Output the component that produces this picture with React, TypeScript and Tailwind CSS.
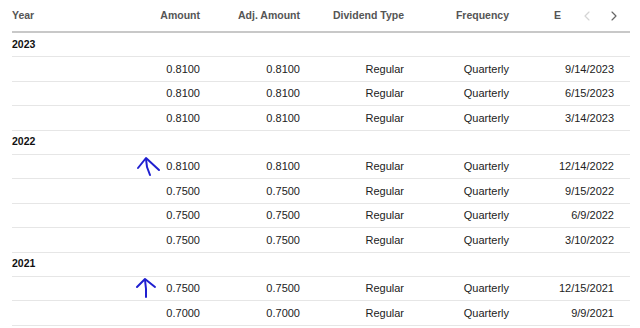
import { ChevronLeft, ChevronRight } from "lucide-react";

type Row = { amount: string; adj: string; type: string; freq: string; date: string };

const groups: { year: string; rows: Row[] }[] = [
  {
    year: "2023",
    rows: [
      { amount: "0.8100", adj: "0.8100", type: "Regular", freq: "Quarterly", date: "9/14/2023" },
      { amount: "0.8100", adj: "0.8100", type: "Regular", freq: "Quarterly", date: "6/15/2023" },
      { amount: "0.8100", adj: "0.8100", type: "Regular", freq: "Quarterly", date: "3/14/2023" },
    ],
  },
  {
    year: "2022",
    rows: [
      { amount: "0.8100", adj: "0.8100", type: "Regular", freq: "Quarterly", date: "12/14/2022" },
      { amount: "0.7500", adj: "0.7500", type: "Regular", freq: "Quarterly", date: "9/15/2022" },
      { amount: "0.7500", adj: "0.7500", type: "Regular", freq: "Quarterly", date: "6/9/2022" },
      { amount: "0.7500", adj: "0.7500", type: "Regular", freq: "Quarterly", date: "3/10/2022" },
    ],
  },
  {
    year: "2021",
    rows: [
      { amount: "0.7500", adj: "0.7500", type: "Regular", freq: "Quarterly", date: "12/15/2021" },
      { amount: "0.7000", adj: "0.7000", type: "Regular", freq: "Quarterly", date: "9/9/2021" },
    ],
  },
];

const cols = "grid grid-cols-[104px_100px_100px_104px_105px_105px]";

export default function App() {
  return (
    <div className="relative w-[640px] h-[328px] overflow-hidden bg-white font-['Liberation_Sans',Arial,sans-serif] text-[11px] text-[#222]">
      <div className="ml-[12px] w-[618px]">
        {/* header */}
        <div className={`${cols} h-[33px] items-center border-b-2 border-[#c8c8c8] text-[#555] font-bold text-[10.5px]`}>
          <div>Year</div>
          <div className="pr-[16px] text-right">Amount</div>
          <div className="pr-[16px] text-right">Adj. Amount</div>
          <div className="pr-[16px] text-right">Dividend Type</div>
          <div className="pr-[16px] text-right">Frequency</div>
          <div className="flex items-center">
            <span className="ml-[29px]">E</span>
            <div className="ml-auto mr-[8px] flex items-center gap-[11px]">
              <ChevronLeft className="w-[16px] h-[16px] text-[#d4d4d4]" strokeWidth={1.75} />
              <ChevronRight className="w-[16px] h-[16px] text-[#666]" strokeWidth={1.75} />
            </div>
          </div>
        </div>

        {groups.map((g) => (
          <div key={g.year}>
            <div className="h-[24.4px] flex items-center border-b border-[#e6e6e6] font-bold text-[10.5px] text-[#111]">
              {g.year}
            </div>
            {g.rows.map((r, i) => (
              <div key={i} className={`${cols} h-[24.4px] items-center border-b border-[#e6e6e6]`}>
                <div />
                <div className="pr-[16px] text-right">{r.amount}</div>
                <div className="pr-[16px] text-right">{r.adj}</div>
                <div className="pr-[16px] text-right">{r.type}</div>
                <div className="pr-[16px] text-right">{r.freq}</div>
                <div className="pr-[16px] text-right">{r.date}</div>
              </div>
            ))}
          </div>
        ))}
      </div>

      {/* hand-drawn annotations */}
      <svg className="absolute left-0 top-0" width="640" height="328" fill="none" stroke="#1f1fd0" strokeWidth="2" strokeLinecap="round" strokeLinejoin="round">
        <path d="M138 168 L146 158 L159 170" />
        <path d="M146 159 L147 167 L150 175" />
        <path d="M137 287 L145 279 L155 287" />
        <path d="M145 280 L146 289 L146 297" />
      </svg>
    </div>
  );
}
